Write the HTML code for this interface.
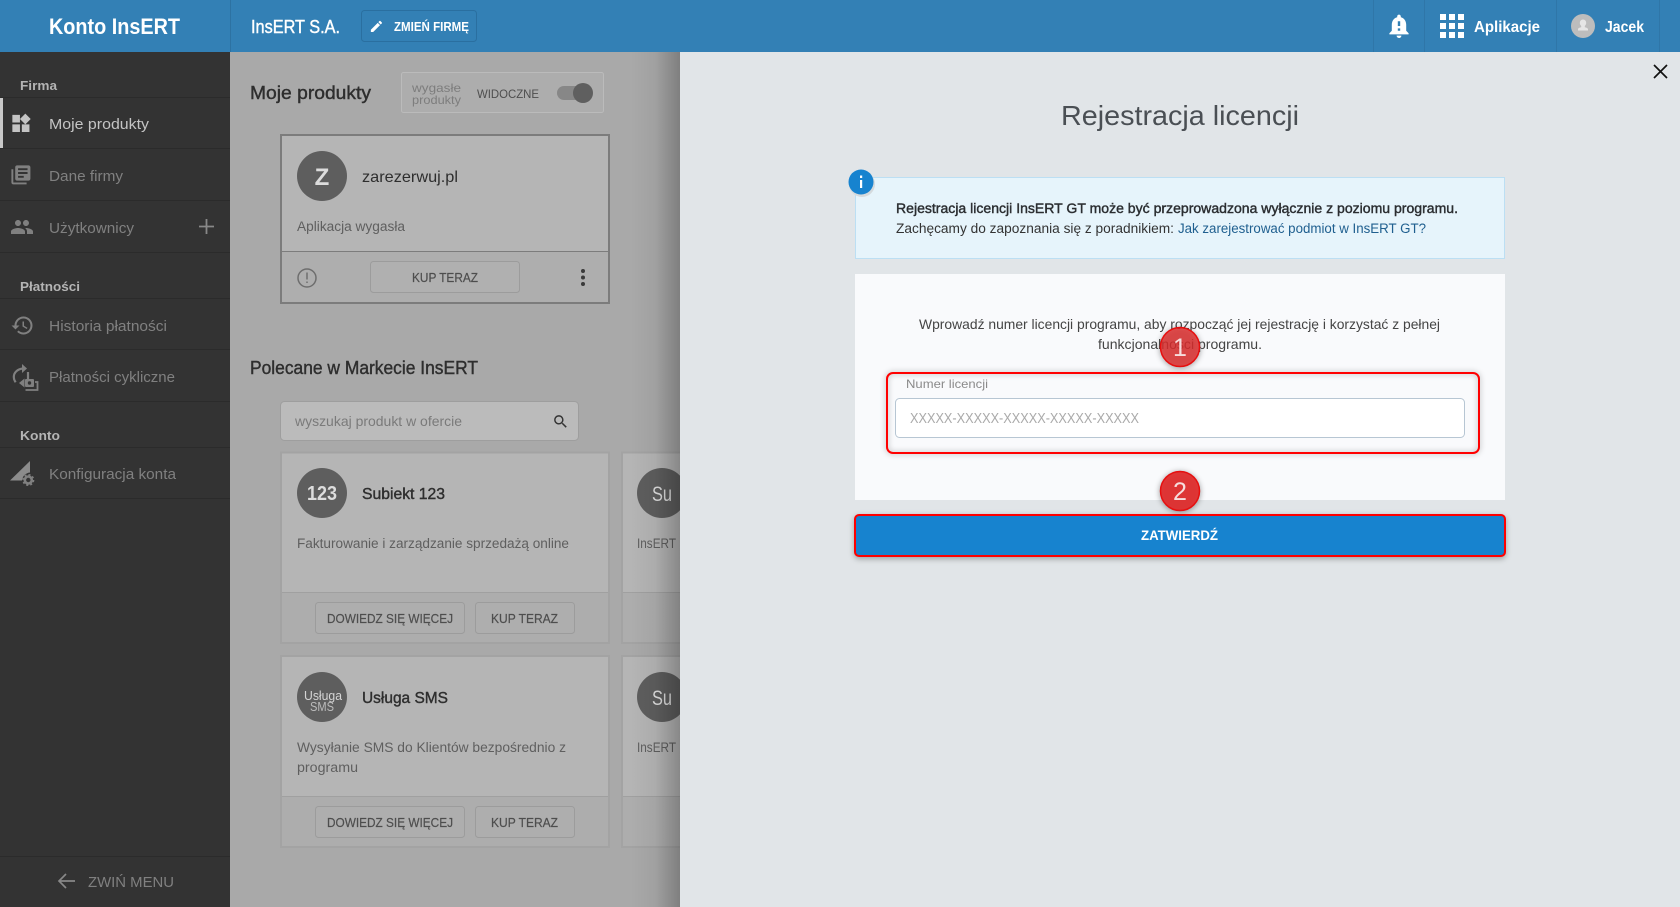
<!DOCTYPE html>
<html lang="pl"><head><meta charset="utf-8"><title>Konto InsERT</title>
<style>
html,body{margin:0;padding:0;width:1680px;height:907px;overflow:hidden;background:#a9a9a9}
svg{display:block}
text{font-family:"Liberation Sans",sans-serif;white-space:pre}
.b{font-weight:bold}
.s{stroke-width:.4px;paint-order:stroke}
.nav{font-size:15px;fill:#808080}
.sec{font-size:13px;font-weight:bold;fill:#b4b4b4}
.desc{font-size:13.5px;fill:#5f5f5f}
.ttl{font-size:16px;fill:#2e2e2e}
.btn{font-size:12.5px;fill:#4e4e4e;stroke:#4e4e4e;stroke-width:.2px}
.hdr{fill:#fff}
</style></head><body>
<svg xmlns="http://www.w3.org/2000/svg" width="1680" height="907" viewBox="0 0 1680 907">
<defs>
<linearGradient id="sh" x1="0" x2="1" y1="0" y2="0"><stop offset="0" stop-color="#000" stop-opacity="0"/><stop offset=".5" stop-color="#000" stop-opacity=".05"/><stop offset="1" stop-color="#000" stop-opacity=".25"/></linearGradient>
</defs>
<!-- content bg -->
<rect x="230" y="52" width="450" height="855" fill="#a9a9a9"/>
<!-- header -->
<rect width="1680" height="52" fill="#3380b5"/>
<rect x="230" y="0" width="1" height="52" fill="#2d72a2"/>
<text x="49" y="34" class="hdr b" font-size="22" textLength="131" lengthAdjust="spacingAndGlyphs">Konto InsERT</text>
<text x="251" y="33" class="hdr s" font-size="18" stroke="#fff" textLength="89" lengthAdjust="spacingAndGlyphs">InsERT S.A.</text>
<rect x="361.500" y="10.500" width="115" height="31" rx="3" fill="none" stroke="#2a6fa0"/>
<path transform="translate(369,19) scale(.62)" fill="#fff" d="M3 17.25V21h3.75L17.81 9.94l-3.75-3.75L3 17.25zM20.71 7.04c.39-.39.39-1.02 0-1.41l-2.34-2.34c-.39-.39-1.02-.39-1.41 0l-1.83 1.83 3.75 3.75 1.83-1.83z"/>
<text x="394" y="31" class="hdr b" font-size="12.500" textLength="75" lengthAdjust="spacingAndGlyphs">ZMIEŃ FIRMĘ</text>
<g fill="#2f76a8"><rect x="1373" width="1" height="52"/><rect x="1424" width="1" height="52"/><rect x="1556" width="1" height="52"/><rect x="1659" width="1" height="52"/></g>
<path transform="translate(1384.600,11.600) scale(1.2)" fill="#fff" d="M18 16v-5c0-3.07-1.64-5.64-4.5-6.32V4c0-.83-.67-1.5-1.5-1.5s-1.5.67-1.5 1.5v.68C7.63 5.36 6 7.92 6 11v5l-2 2v1h16v-1l-2-2zm-5 0h-2v-2h2v2zm0-4h-2V8h2v4zm-1 10c1.1 0 2-.9 2-2h-4c0 1.1.9 2 2 2z"/>
<g fill="#fff">
<rect x="1440" y="14" width="6" height="6"/><rect x="1449" y="14" width="6" height="6"/><rect x="1458" y="14" width="6" height="6"/>
<rect x="1440" y="23" width="6" height="6"/><rect x="1449" y="23" width="6" height="6"/><rect x="1458" y="23" width="6" height="6"/>
<rect x="1440" y="32" width="6" height="6"/><rect x="1449" y="32" width="6" height="6"/><rect x="1458" y="32" width="6" height="6"/>
</g>
<text x="1474" y="32" class="hdr b" font-size="15.500" textLength="66" lengthAdjust="spacingAndGlyphs">Aplikacje</text>
<circle cx="1583" cy="26" r="12" fill="#bdbdbd"/>
<path fill="#e6e6e6" d="M1583 19.500a3.200 3.200 0 0 1 3.200 3.400c0 1.400-.8 2.400-1.400 3.100v1.200c1.600.3 3.200.9 3.200 2v1.300h-10v-1.300c0-1.100 1.600-1.700 3.200-2V26c-.6-.7-1.400-1.700-1.400-3.100a3.200 3.200 0 0 1 3.200-3.400z"/>
<text x="1605" y="32" class="hdr b" font-size="15.500" textLength="39" lengthAdjust="spacingAndGlyphs">Jacek</text>

<!-- sidebar -->
<rect x="0" y="52" width="230" height="855" fill="#333"/>
<g fill="#2b2b2b"><rect y="97" width="230" height="1"/><rect y="148" width="230" height="1"/><rect y="200" width="230" height="1"/><rect y="252" width="230" height="1"/><rect y="298" width="230" height="1"/><rect y="349" width="230" height="1"/><rect y="401" width="230" height="1"/><rect y="447" width="230" height="1"/><rect y="498" width="230" height="1"/><rect y="856" width="230" height="1"/></g>
<rect x="0" y="98" width="3" height="50" fill="#c8c8c8"/>
<text x="20" y="90" class="sec" textLength="37" lengthAdjust="spacingAndGlyphs">Firma</text>
<path transform="translate(9.500,112) scale(.95)" fill="#c4c4c4" d="M13 13v8h8v-8h-8zM3 21h8v-8H3v8zM3 3v8h8V3H3zm13.660-1.310L11 7.340 16.660 13l5.660-5.660-5.660-5.650z"/>
<text x="49" y="129" class="nav" style="fill:#c4c4c4" textLength="100" lengthAdjust="spacingAndGlyphs">Moje produkty</text>
<path transform="translate(9.500,163.500) scale(.95)" fill="#808080" d="M4 6H2v14c0 1.100.9 2 2 2h14v-2H4V6zm16-4H8c-1.100 0-2 .9-2 2v12c0 1.100.9 2 2 2h12c1.100 0 2-.9 2-2V4c0-1.100-.9-2-2-2zm-1 9H9V9h10v2zm-4 4H9v-2h6v2zm4-8H9V5h10v2z"/>
<text x="49" y="181" class="nav" textLength="74" lengthAdjust="spacingAndGlyphs">Dane firmy</text>
<path transform="translate(10,215)" fill="#808080" d="M16 11c1.660 0 2.990-1.340 2.990-3S17.660 5 16 5c-1.660 0-3 1.340-3 3s1.340 3 3 3zm-8 0c1.660 0 2.990-1.340 2.990-3S9.660 5 8 5C6.340 5 5 6.340 5 8s1.340 3 3 3zm0 2c-2.330 0-7 1.170-7 3.500V19h14v-2.500c0-2.330-4.670-3.500-7-3.500zm8 0c-.29 0-.62.02-.97.05 1.160.84 1.970 1.970 1.970 3.450V19h6v-2.500c0-2.330-4.670-3.500-7-3.500z"/>
<text x="49" y="233" class="nav" textLength="85" lengthAdjust="spacingAndGlyphs">Użytkownicy</text>
<path d="M206.500 219v15M199 226.500h15" stroke="#888" stroke-width="1.800" fill="none"/>
<text x="20" y="291" class="sec" textLength="60" lengthAdjust="spacingAndGlyphs">Płatności</text>
<path transform="translate(10.500,313.500)" fill="#808080" d="M13 3c-4.970 0-9 4.030-9 9H1l3.890 3.890.07.140L9 12H6c0-3.870 3.130-7 7-7s7 3.130 7 7-3.130 7-7 7c-1.930 0-3.680-.79-4.940-2.060l-1.420 1.420C8.270 19.990 10.510 21 13 21c4.970 0 9-4.030 9-9s-4.030-9-9-9zm-1 5v5l4.280 2.540.72-1.210-3.500-2.080V8H12z"/>
<text x="49" y="331" class="nav" textLength="118" lengthAdjust="spacingAndGlyphs">Historia płatności</text>
<!-- cyclic payments icon -->
<path d="M23 368.500C17.500 369 13.800 372.500 13.800 377c0 2 .7 3.800 1.900 5.200M28 372v8" fill="none" stroke="#808080" stroke-width="2.200"/>
<path fill="#808080" d="M22 364l5 4.500-5 4.500zM24.500 378.500l-5.500 4.500 5.500 4.500z"/>
<rect x="25" y="379" width="9" height="8" rx="1" fill="#808080"/>
<circle cx="29.500" cy="383" r="1.700" fill="#333"/>
<path d="M35 382h2.500v8h-12" fill="none" stroke="#808080" stroke-width="1.800"/>
<text x="49" y="382" class="nav" textLength="126" lengthAdjust="spacingAndGlyphs">Płatności cykliczne</text>
<text x="20" y="440" class="sec" textLength="40" lengthAdjust="spacingAndGlyphs">Konto</text>
<!-- config icon -->
<path fill="#8c8c8c" d="M10 480.500L30 461v11.500c-4.500.5-7.500 3.500-8 8z"/>
<circle cx="28.300" cy="480" r="3.500" fill="none" stroke="#808080" stroke-width="2.600"/>
<circle cx="28.300" cy="480" r="5.300" fill="none" stroke="#808080" stroke-width="1.500" stroke-dasharray="2.100 2.060"/>
<text x="49" y="479" class="nav" textLength="127" lengthAdjust="spacingAndGlyphs">Konfiguracja konta</text>
<path d="M75 881H59M66 874l-7 7 7 7" fill="none" stroke="#888" stroke-width="1.700"/>
<text x="88" y="887" class="nav" textLength="86" lengthAdjust="spacingAndGlyphs">ZWIŃ MENU</text>

<!-- products -->
<text x="250" y="99" font-size="18" fill="#2e2e2e" class="s" stroke="#2e2e2e" textLength="121" lengthAdjust="spacingAndGlyphs">Moje produkty</text>
<rect x="401.500" y="72.500" width="202" height="40" rx="2" fill="#adadad" stroke="#bbb"/>
<text x="412" y="92" font-size="12" fill="#7d7d7d" textLength="49" lengthAdjust="spacingAndGlyphs">wygasłe</text>
<text x="412" y="104" font-size="12" fill="#7d7d7d" textLength="49" lengthAdjust="spacingAndGlyphs">produkty</text>
<text x="477" y="98" font-size="12" fill="#4e4e4e" textLength="62" lengthAdjust="spacingAndGlyphs">WIDOCZNE</text>
<rect x="557" y="86" width="30" height="14" rx="7" fill="#878787"/>
<circle cx="583" cy="93" r="10" fill="#5f5f5f"/>

<!-- card 1 -->
<rect x="281" y="135" width="328" height="168" fill="#b5b5b5" stroke="#7c7c7c" stroke-width="2"/>
<rect x="282" y="251" width="326" height="1" fill="#7c7c7c"/>
<rect x="282" y="252" width="326" height="50" fill="#aeaeae"/>
<circle cx="322" cy="176" r="25" fill="#5e5e5e"/>
<text x="322" y="185" font-size="24" class="b" fill="#dcdcdc" text-anchor="middle">Z</text>
<text x="362" y="182" class="ttl" textLength="96" lengthAdjust="spacingAndGlyphs">zarezerwuj.pl</text>
<text x="297" y="231" class="desc" textLength="108" lengthAdjust="spacingAndGlyphs">Aplikacja wygasła</text>
<circle cx="307" cy="278" r="9" fill="none" stroke="#6e6e6e" stroke-width="1.500"/>
<path d="M307 272.500v7M307 281.500v1.500" stroke="#6e6e6e" stroke-width="1.500" fill="none"/>
<rect x="370.500" y="261.500" width="149" height="31" rx="3" fill="#b0b0b0" stroke="#9c9c9c"/>
<text x="412" y="282" class="btn" textLength="66" lengthAdjust="spacingAndGlyphs">KUP TERAZ</text>
<g fill="#3a3a3a"><circle cx="583" cy="271" r="2"/><circle cx="583" cy="277.500" r="2"/><circle cx="583" cy="284" r="2"/></g>

<text x="250" y="374" font-size="18" fill="#2e2e2e" class="s" stroke="#2e2e2e" textLength="228" lengthAdjust="spacingAndGlyphs">Polecane w Markecie InsERT</text>
<rect x="280.500" y="401.500" width="298" height="39" rx="4" fill="#bbb" stroke="#9e9e9e"/>
<text x="295" y="426" font-size="14" fill="#7a7a7a" textLength="167" lengthAdjust="spacingAndGlyphs">wyszukaj produkt w ofercie</text>
<path transform="translate(552,413) scale(.72)" fill="#333" d="M15.500 14h-.79l-.28-.27C15.410 12.590 16 11.110 16 9.500 16 5.910 13.090 3 9.500 3S3 5.910 3 9.500 5.910 16 9.500 16c1.610 0 3.090-.59 4.230-1.570l.27.280v.79l5 4.990L20.490 19l-4.990-5zm-6 0C7.010 14 5 11.990 5 9.500S7.010 5 9.500 5 14 7.010 14 9.500 11.990 14 9.500 14z"/>

<!-- card Subiekt 123 -->
<rect x="281" y="452.500" width="328" height="190.500" fill="#b5b5b5" stroke="#a3a3a3" stroke-width="2"/>
<rect x="282" y="592" width="326" height="1" fill="#a0a0a0"/>
<rect x="282" y="593" width="326" height="49" fill="#adadad"/>
<circle cx="322" cy="493" r="25" fill="#5e5e5e"/>
<text x="322" y="500" font-size="20" class="b" fill="#ddd" text-anchor="middle" textLength="30" lengthAdjust="spacingAndGlyphs">123</text>
<text x="362" y="499" class="ttl s" stroke="#2e2e2e" textLength="83" lengthAdjust="spacingAndGlyphs">Subiekt 123</text>
<text x="297" y="548" class="desc" textLength="272" lengthAdjust="spacingAndGlyphs">Fakturowanie i zarządzanie sprzedażą online</text>
<rect x="315.500" y="602.500" width="149" height="31" rx="3" fill="#aeaeae" stroke="#9c9c9c"/>
<text x="327" y="623" class="btn" textLength="126" lengthAdjust="spacingAndGlyphs">DOWIEDZ SIĘ WIĘCEJ</text>
<rect x="475.500" y="602.500" width="99" height="31" rx="3" fill="#aeaeae" stroke="#9c9c9c"/>
<text x="491" y="623" class="btn" textLength="67" lengthAdjust="spacingAndGlyphs">KUP TERAZ</text>

<!-- card 2 -->
<rect x="622" y="452.500" width="70" height="190.500" fill="#b5b5b5" stroke="#a3a3a3" stroke-width="2"/>
<rect x="623" y="592" width="60" height="1" fill="#a0a0a0"/>
<rect x="623" y="593" width="60" height="49" fill="#adadad"/>
<circle cx="662" cy="493" r="25" fill="#5e5e5e"/>
<text x="652" y="501" font-size="21" fill="#ddd" textLength="20" lengthAdjust="spacingAndGlyphs">Su</text>
<text x="637" y="548" class="desc" textLength="39" lengthAdjust="spacingAndGlyphs">InsERT</text>

<!-- card SMS -->
<rect x="281" y="656" width="328" height="191" fill="#b5b5b5" stroke="#a3a3a3" stroke-width="2"/>
<rect x="282" y="796" width="326" height="1" fill="#a0a0a0"/>
<rect x="282" y="797" width="326" height="49" fill="#adadad"/>
<circle cx="322" cy="697" r="25" fill="#5e5e5e"/>
<text x="304" y="700" font-size="13" fill="#d5d5d5" textLength="38" lengthAdjust="spacingAndGlyphs">Usługa</text>
<text x="310" y="711" font-size="13" fill="#bbb" textLength="24" lengthAdjust="spacingAndGlyphs">SMS</text>
<text x="362" y="703" class="ttl s" stroke="#2e2e2e" textLength="86" lengthAdjust="spacingAndGlyphs">Usługa SMS</text>
<text x="297" y="752" class="desc" textLength="269" lengthAdjust="spacingAndGlyphs">Wysyłanie SMS do Klientów bezpośrednio z</text>
<text x="297" y="772" class="desc" textLength="61" lengthAdjust="spacingAndGlyphs">programu</text>
<rect x="315.500" y="806.500" width="149" height="31" rx="3" fill="#aeaeae" stroke="#9c9c9c"/>
<text x="327" y="827" class="btn" textLength="126" lengthAdjust="spacingAndGlyphs">DOWIEDZ SIĘ WIĘCEJ</text>
<rect x="475.500" y="806.500" width="99" height="31" rx="3" fill="#aeaeae" stroke="#9c9c9c"/>
<text x="491" y="827" class="btn" textLength="67" lengthAdjust="spacingAndGlyphs">KUP TERAZ</text>

<!-- card 4 -->
<rect x="622" y="656" width="70" height="191" fill="#b5b5b5" stroke="#a3a3a3" stroke-width="2"/>
<rect x="623" y="796" width="60" height="1" fill="#a0a0a0"/>
<rect x="623" y="797" width="60" height="49" fill="#adadad"/>
<circle cx="662" cy="697" r="25" fill="#5e5e5e"/>
<text x="652" y="705" font-size="21" fill="#ddd" textLength="20" lengthAdjust="spacingAndGlyphs">Su</text>
<text x="637" y="752" class="desc" textLength="39" lengthAdjust="spacingAndGlyphs">InsERT</text>

<!-- panel shadow + panel -->
<rect x="630" y="52" width="50" height="855" fill="url(#sh)"/>
<rect x="680" y="52" width="1000" height="855" fill="#e1e5e8"/>
<path d="M1654 65l13 13M1667 65l-13 13" stroke="#111" stroke-width="1.700" fill="none"/>
<text x="1061" y="125" font-size="28" fill="#4a4f54" textLength="238" lengthAdjust="spacingAndGlyphs">Rejestracja licencji</text>

<!-- info -->
<rect x="855.500" y="177.500" width="649" height="81" fill="#e6f4fb" stroke="#bcdff3"/>
<circle cx="862" cy="184" r="13" fill="#d5dadd"/>
<circle cx="861" cy="182" r="12.500" fill="#1783cf"/>
<rect x="860" y="180" width="2.200" height="8" fill="#fff"/><rect x="860" y="175.500" width="2.200" height="2.500" fill="#fff"/>
<text x="896" y="213" font-size="13.500" fill="#2a2d30" class="s" stroke="#2a2d30" textLength="562" lengthAdjust="spacingAndGlyphs">Rejestracja licencji InsERT GT może być przeprowadzona wyłącznie z poziomu programu.</text>
<text x="896" y="233" font-size="13.500" fill="#333" textLength="278" lengthAdjust="spacingAndGlyphs">Zachęcamy do zapoznania się z poradnikiem:</text>
<text x="1178" y="233" font-size="13.500" fill="#1f5f8f" textLength="248" lengthAdjust="spacingAndGlyphs">Jak zarejestrować podmiot w InsERT GT?</text>

<!-- form -->
<rect x="855" y="274" width="650" height="226" fill="#f9fafc"/>
<text x="919" y="329" font-size="14" fill="#444" textLength="521" lengthAdjust="spacingAndGlyphs">Wprowadź numer licencji programu, aby rozpocząć jej rejestrację i korzystać z pełnej</text>
<text x="1098" y="349" font-size="14" fill="#444" textLength="164" lengthAdjust="spacingAndGlyphs">funkcjonalności programu.</text>
<text x="906" y="388" font-size="12" fill="#8a8a8a" textLength="82" lengthAdjust="spacingAndGlyphs">Numer licencji</text>
<rect x="895.500" y="398.500" width="569" height="39" rx="4" fill="#fff" stroke="#b7c6d3"/>
<text x="910" y="423" font-size="14.500" fill="#aaa" textLength="229" lengthAdjust="spacingAndGlyphs">XXXXX-XXXXX-XXXXX-XXXXX-XXXXX</text>
<rect x="887" y="373" width="592" height="80" rx="6" fill="none" stroke="#f00" stroke-width="2" style="filter:drop-shadow(0 0 3px rgba(0,0,0,.35))"/>

<!-- submit -->
<rect x="855" y="515" width="650" height="41" rx="4" fill="#1783cf" stroke="#f00" stroke-width="2" style="filter:drop-shadow(0 2px 3px rgba(0,0,0,.3))"/>
<text x="1141" y="540" font-size="14" class="hdr b" textLength="77" lengthAdjust="spacingAndGlyphs">ZATWIERDŹ</text>

<!-- badges -->
<circle cx="1180" cy="347" r="19.500" fill="#e02e2e" fill-opacity=".82" stroke="#e60f0f" stroke-width="1.500" style="filter:drop-shadow(0 1px 3px rgba(0,0,0,.4))"/>
<text x="1180" y="356" font-size="25" fill="#f6dddd" text-anchor="middle">1</text>
<circle cx="1180" cy="491" r="19.500" fill="#e02e2e" fill-opacity=".95" stroke="#e60f0f" stroke-width="1.500" style="filter:drop-shadow(0 1px 3px rgba(0,0,0,.4))"/>
<text x="1180" y="500" font-size="25" fill="#f6dddd" text-anchor="middle">2</text>
</svg>
</body></html>
